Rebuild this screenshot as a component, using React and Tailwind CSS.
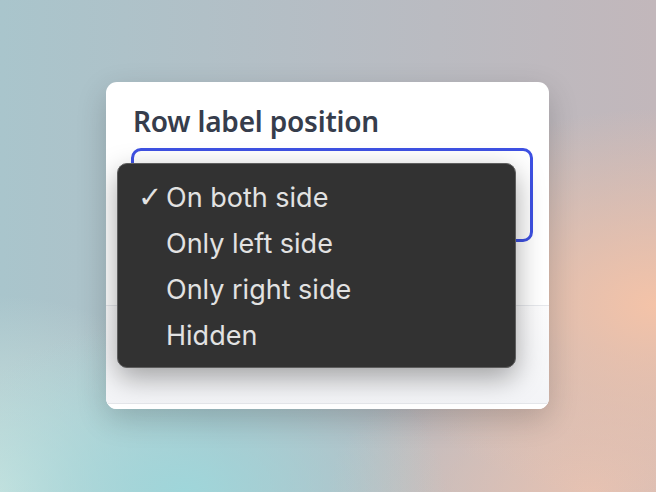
export default function App() {
  const items = ["On both side", "Only left side", "Only right side", "Hidden"];
  return (
    <div className="w-[656px] h-[492px] overflow-hidden relative bg-[radial-gradient(ellipse_45%_40%_at_100%_62%,#f4c3a8_0%,rgba(244,195,168,0)_100%),radial-gradient(ellipse_40%_35%_at_28%_100%,#9fd6da_0%,rgba(159,214,218,0)_100%),radial-gradient(ellipse_35%_40%_at_0%_100%,#cfe5e0_0%,rgba(207,229,224,0)_100%),radial-gradient(ellipse_40%_30%_at_90%_100%,#e6c2b2_0%,rgba(230,194,178,0)_100%),linear-gradient(90deg,#a9c5cc_0%,#b6bdc4_50%,#c2b7bb_100%)] pl-[106px] pt-[82px]">
      <div className="w-[443px] h-[327px] bg-white rounded-[11px] shadow-[0_10px_30px_rgba(0,0,0,0.18)] flex flex-col overflow-hidden relative">
        <div className="px-[27px] pt-[20px] h-[223px]">
          <div className="text-[28px] leading-[38px] font-semibold text-[#363d4c] font-['Noto_Sans',sans-serif] tracking-[-0.2px]">Row label position</div>
          <div className="mt-[8px] -ml-[2px] w-[402px] h-[94px] rounded-[10px] border-[3px] border-[#3e51e3]"></div>
        </div>
        <div className="flex-1 border-t border-[#e6e8ec] bg-[linear-gradient(180deg,#fbfbfc_0%,#f3f4f7_100%)] flex flex-col">
          <div className="flex-1"></div>
          <div className="h-[6px] border-t border-[#e4e6ea] bg-white"></div>
        </div>
        <div className="absolute left-[11px] top-[81px] w-[399px] h-[205px] bg-[#323232] rounded-[10px] border border-[#5e5e5e] shadow-[0_10px_28px_rgba(0,0,0,0.35)] pt-[10px] font-['Inter',sans-serif] text-[#e2e2e2]">
          {items.map((t, i) => (
            <div key={t} className="h-[46px] flex items-center">
              <span className="w-[48px] pl-[20px] text-[29px] leading-none font-['DejaVu_Sans',sans-serif]">{i === 0 ? "✓" : ""}</span>
              <span className="text-[27px] leading-none">{t}</span>
            </div>
          ))}
        </div>
      </div>
    </div>
  );
}
